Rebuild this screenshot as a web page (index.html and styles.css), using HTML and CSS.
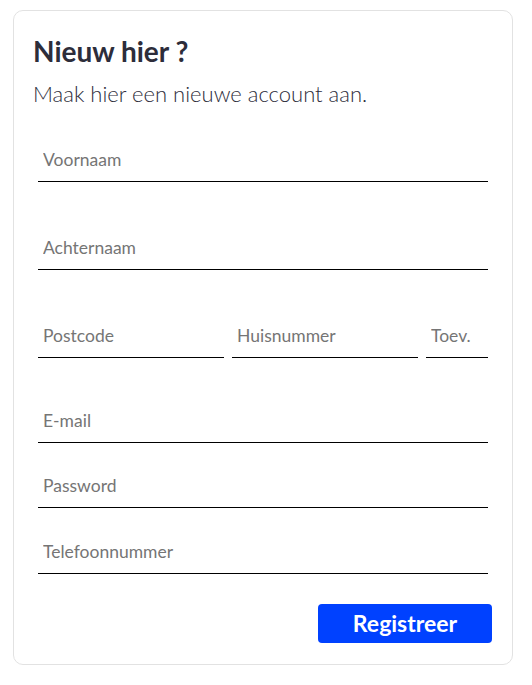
FILE: index.html
```html
<!DOCTYPE html>
<html lang="nl">
<head>
<meta charset="utf-8">
<title>Registreren</title>
<link rel="stylesheet" href="styles.css">
</head>
<body>
<div class="card">
  <h1 class="title">Nieuw hier ?</h1>
  <p class="subtitle">Maak hier een nieuwe account aan.</p>
  <form class="form">
    <input class="field gap-l" type="text" placeholder="Voornaam">
    <input class="field gap-l" type="text" placeholder="Achternaam">
    <div class="row gap-m">
      <input class="field" type="text" placeholder="Postcode">
      <input class="field" type="text" placeholder="Huisnummer">
      <input class="field small" type="text" placeholder="Toev.">
    </div>
    <input class="field gap-s" type="email" placeholder="E-mail">
    <input class="field gap-s2" type="password" placeholder="Password">
    <input class="field" type="tel" placeholder="Telefoonnummer">
    <div class="actions">
      <button class="btn" type="button">Registreer</button>
    </div>
  </form>
</div>
</body>
</html>
```
FILE: styles.css
```css
* { box-sizing: border-box; }
body {
  margin: 0;
  padding: 10px 19px 0 13px;
  font-family: Lato, "Open Sans", sans-serif;
  background: #fff;
}
.card {
  border: 1px solid #e2e2e2;
  border-radius: 10px;
  padding: 24px 19px 20px 19px;
  width: 500px;
  height: 655px;
}
.title {
  margin: 0;
  font-size: 28px;
  font-weight: 700;
  line-height: 1.2;
  color: #2d2d3a;
}
.subtitle {
  margin: 12px 0 0 0;
  font-family: "Lato Light", Lato, sans-serif;
  font-size: 22px;
  font-weight: 300;
  line-height: 1.2;
  color: #2d2d3a;
}
.form {
  display: flex;
  flex-direction: column;
  margin: 31px 5px 0 5px;
}
.field {
  display: block;
  width: 100%;
  height: 44px;
  border: 0;
  border-bottom: 1px solid #000;
  padding: 0 5px;
  font-family: Lato, "Open Sans", sans-serif;
  font-size: 17.5px;
  color: #222;
  background: transparent;
  outline: none;
}
.field::placeholder { color: #757575; }
.gap-l { margin-bottom: 44px; }
.gap-m { margin-bottom: 41px; }
.gap-s { margin-bottom: 21px; }
.gap-s2 { margin-bottom: 22px; }
.row {
  display: flex;
  gap: 8px;
}
.row .field { flex: 1 1 0; min-width: 0; }
.row .field.small { flex: 0 0 62px; }
.actions {
  display: flex;
  justify-content: flex-end;
  margin: 30px -4px 0 0;
}
.btn {
  width: 174px;
  height: 39px;
  border: 0;
  border-radius: 4px;
  background: #0041ff;
  color: #fff;
  font-family: Lato, "Open Sans", sans-serif;
  font-size: 23px;
  font-weight: 700;
  cursor: pointer;
}
```
